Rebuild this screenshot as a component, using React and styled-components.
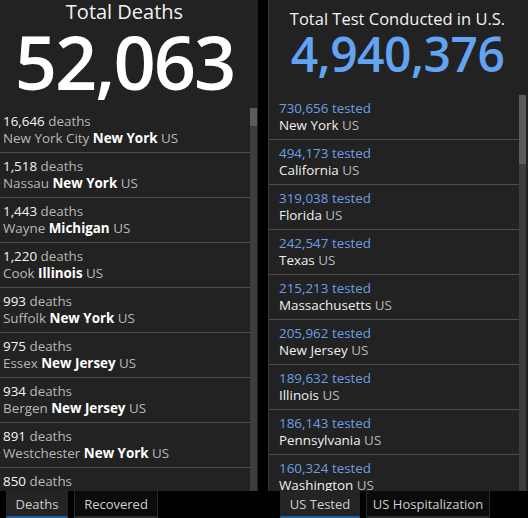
import React from 'react';
import styled, { createGlobalStyle } from 'styled-components';

const deaths = [
  { count: '16,646', place: 'New York City', state: 'New York' },
  { count: '1,518', place: 'Nassau', state: 'New York' },
  { count: '1,443', place: 'Wayne', state: 'Michigan' },
  { count: '1,220', place: 'Cook', state: 'Illinois' },
  { count: '993', place: 'Suffolk', state: 'New York' },
  { count: '975', place: 'Essex', state: 'New Jersey' },
  { count: '934', place: 'Bergen', state: 'New Jersey' },
  { count: '891', place: 'Westchester', state: 'New York' },
  { count: '850', place: 'Hudson', state: 'New Jersey' },
];

const tested = [
  { count: '730,656', state: 'New York' },
  { count: '494,173', state: 'California' },
  { count: '319,038', state: 'Florida' },
  { count: '242,547', state: 'Texas' },
  { count: '215,213', state: 'Massachusetts' },
  { count: '205,962', state: 'New Jersey' },
  { count: '189,632', state: 'Illinois' },
  { count: '186,143', state: 'Pennsylvania' },
  { count: '160,324', state: 'Washington' },
];

const GlobalStyle = createGlobalStyle`
  html, body {
    margin: 0;
    padding: 0;
    background: #000;
  }
  body {
    font-family: "Open Sans", "Liberation Sans", sans-serif;
  }
`;

const Dashboard = styled.div`
  display: grid;
  grid-template-columns: 258px 260px;
  column-gap: 10px;
  width: 528px;
  height: 518px;
  overflow: hidden;
  background: #000;
`;

const Column = styled.div`
  display: flex;
  flex-direction: column;
  min-width: 0;
`;

const Panel = styled.section`
  height: 491px;
  display: flex;
  flex-direction: column;
  background: #222;
  border-left: ${(p) => (p.$bordered ? '1px solid #3a3a3a' : 'none')};
  padding-right: ${(p) => p.$padRight}px;
  overflow: hidden;
`;

const Header = styled.header`
  height: ${(p) => p.$height}px;
  flex: none;
  display: flex;
  flex-direction: column;
  align-items: center;
  padding-top: ${(p) => p.$padTop}px;
  padding-right: ${(p) => p.$shift}px;
  box-sizing: border-box;
`;

const Title = styled.div`
  font-size: ${(p) => p.$size}px;
  line-height: 22px;
  color: #f2f2f2;
`;

const BigNumber = styled.div`
  font-size: ${(p) => p.$size}px;
  line-height: ${(p) => p.$lh}px;
  font-weight: 600;
  letter-spacing: ${(p) => p.$spacing}px;
  color: ${(p) => p.$color};
`;

const ListArea = styled.div`
  flex: 1;
  display: flex;
  min-height: 0;
`;

const Items = styled.ul`
  flex: 1;
  list-style: none;
  margin: 0;
  padding: 0;
  overflow: hidden;
`;

const Row = styled.li`
  padding: 5px ${(p) => p.$indent}px 5px;
  border-bottom: 1px solid #4e4e4e;
  font-size: 13.4px;
  line-height: 17px;
  color: #b8b8b8;
  white-space: nowrap;
`;

const Count = styled.span`
  color: ${(p) => p.$color};
`;

const Bold = styled.b`
  font-weight: 700;
  color: #fff;
`;

const Region = styled.span`
  color: #f0f0f0;
`;

const Track = styled.div`
  width: 7px;
  flex: none;
  background: #3d3d3d;
`;

const Thumb = styled.div`
  height: ${(p) => p.$height}px;
  background: #5c5c5c;
`;

const TabBar = styled.nav`
  height: 27px;
  display: flex;
  gap: 6px;
  padding-left: ${(p) => p.$indent}px;
`;

const Tab = styled.div`
  width: ${(p) => p.$width}px;
  box-sizing: border-box;
  display: flex;
  align-items: center;
  justify-content: center;
  font-size: 13px;
  line-height: 16px;
  color: #cfcfcf;
  background: ${(p) => (p.$active ? '#242424' : '#0b0b0b')};
  border: 1px solid ${(p) => (p.$active ? '#242424' : '#2c2c2c')};
  border-bottom: 2px solid ${(p) => (p.$active ? '#1f5f9e' : '#2c2c2c')};
  border-top: none;
`;

export default function App() {
  return (
    <>
      <GlobalStyle />
      <Dashboard>
        <Column>
          <Panel $padRight={1}>
            <Header $height={108} $padTop={1} $shift={8}>
              <Title $size={20}>Total Deaths</Title>
              <BigNumber $size={74} $lh={78} $spacing={-2} $color="#fff">52,063</BigNumber>
            </Header>
            <ListArea>
              <Items>
                {deaths.map((d) => (
                  <Row key={d.place} $indent={3}>
                    <div>
                      <Count $color="#f4f4f4">{d.count}</Count> deaths
                    </div>
                    <div>
                      {d.place} <Bold>{d.state}</Bold> US
                    </div>
                  </Row>
                ))}
              </Items>
              <Track>
                <Thumb $height={18} />
              </Track>
            </ListArea>
          </Panel>
          <TabBar $indent={6}>
            <Tab $width={62} $active>Deaths</Tab>
            <Tab $width={84}>Recovered</Tab>
          </TabBar>
        </Column>
        <Column>
          <Panel $bordered $padRight={2}>
            <Header $height={95} $padTop={8} $shift={0}>
              <Title $size={16.5}>Total Test Conducted in U.S.</Title>
              <BigNumber $size={48} $lh={47} $spacing={-0.5} $color="#63a4f2">4,940,376</BigNumber>
            </Header>
            <ListArea>
              <Items>
                {tested.map((t) => (
                  <Row key={t.state} $indent={10}>
                    <div>
                      <Count $color="#6b9fe4">{t.count} tested</Count>
                    </div>
                    <div>
                      <Region>{t.state}</Region> US
                    </div>
                  </Row>
                ))}
              </Items>
              <Track>
                <Thumb $height={69} />
              </Track>
            </ListArea>
          </Panel>
          <TabBar $indent={12}>
            <Tab $width={80} $active>US Tested</Tab>
            <Tab $width={124}>US Hospitalization</Tab>
          </TabBar>
        </Column>
      </Dashboard>
    </>
  );
}
